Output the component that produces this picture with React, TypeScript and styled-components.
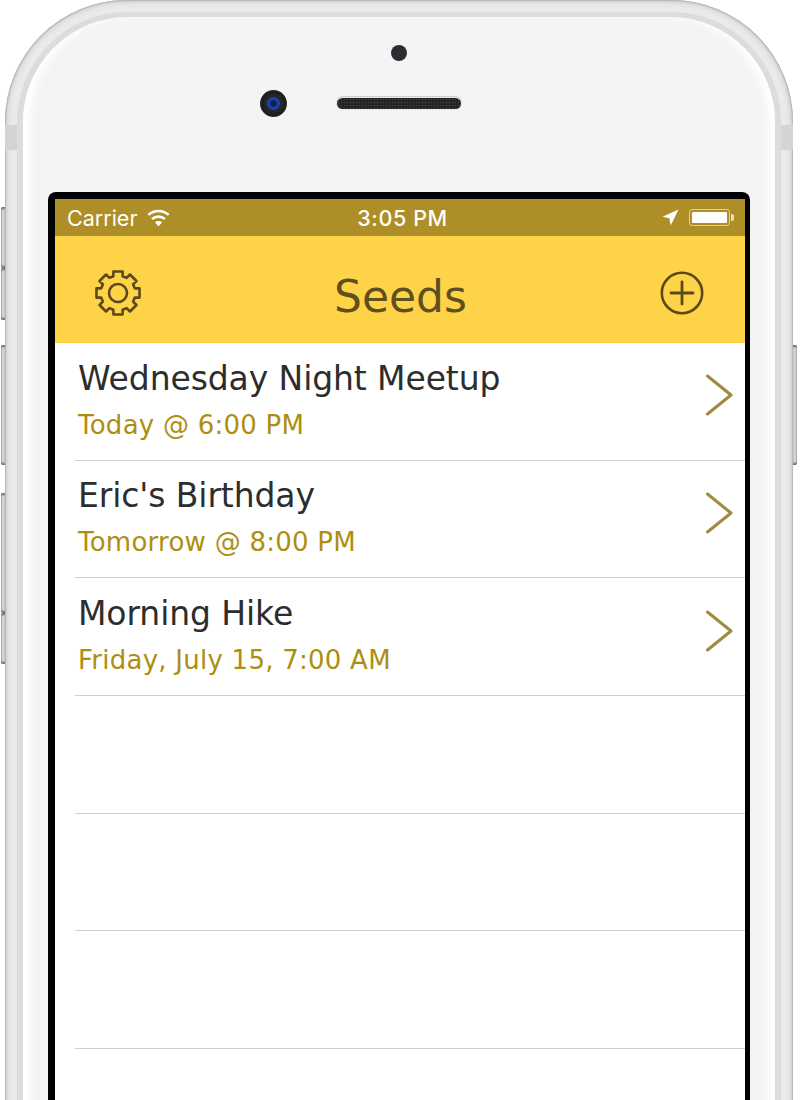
import React from 'react';
import styled, { createGlobalStyle } from 'styled-components';

const GlobalStyle = createGlobalStyle`
  html, body {
    margin: 0;
    padding: 0;
    background: #fff;
  }
  #root {
    height: 1100px;
    overflow: hidden;
  }
`;

const seeds = [
  { title: 'Wednesday Night Meetup', when: 'Today @ 6:00 PM' },
  { title: "Eric's Birthday", when: 'Tomorrow @ 8:00 PM' },
  { title: 'Morning Hike', when: 'Friday, July 15, 7:00 AM' },
  { title: '', when: '' },
  { title: '', when: '' },
  { title: '', when: '' },
  { title: '', when: '' }
];

const sideButtons = [
  { top: 207, height: 61 },
  { top: 268, height: 52 },
  { top: 345, height: 120 },
  { top: 493, height: 120 },
  { top: 613, height: 51 }
];

// 8 flat teeth round a ring, easier to compute than to write out by hand
const gearPath = () => {
  const cx = 24;
  const cy = 24;
  const outer = 22;
  const inner = 17.4;
  const pts: string[] = [];
  for (let i = 0; i < 8; i++) {
    const a = (i * Math.PI) / 4 - Math.PI / 2;
    const steps: [number, number][] = [
      [inner, -0.27],
      [outer, -0.21],
      [outer, 0.21],
      [inner, 0.27]
    ];
    steps.forEach(([r, d]) => {
      pts.push(`${(cx + r * Math.cos(a + d)).toFixed(2)} ${(cy + r * Math.sin(a + d)).toFixed(2)}`);
    });
  }
  return `M${pts.join('L')}Z`;
};

function App() {
  return (
    <>
      <GlobalStyle />
      <Page>
        {sideButtons.map((b) => (
          <SideButton key={b.top} $top={b.top} $height={b.height} />
        ))}
        <RightButton />
        <Phone>
          <AntennaLeft />
          <AntennaRight />
          <Band>
            <Face>
              <Sensors>
                <Dot />
                <EarRow>
                  <Camera>
                    <Lens />
                  </Camera>
                  <Speaker />
                  <span />
                </EarRow>
              </Sensors>
              <Bezel>
                <Screen>
                  <StatusBar>
                    <StatusLeft>
                      Carrier
                      <svg width="25" height="18" viewBox="1.5 0 21 17">
                        <path d="M12 16.5 8.6 12.6a5 5 0 0 1 6.8 0z" fill="#fff" />
                        <path
                          d="M5.9 9.6a9 9 0 0 1 12.2 0M2.4 5.6a14.2 14.2 0 0 1 19.2 0"
                          fill="none"
                          stroke="#fff"
                          strokeWidth="2.4"
                        />
                      </svg>
                    </StatusLeft>
                    <StatusTime>3:05 PM</StatusTime>
                    <StatusRight>
                      <svg width="17" height="17" viewBox="0 0 17 17">
                        <path d="M16.5.5 8.7 16.5 7.4 9.3.5 7.8z" fill="#fff" />
                      </svg>
                      <Battery>
                        <BatteryFill />
                      </Battery>
                    </StatusRight>
                  </StatusBar>
                  <NavBar>
                    <svg width="48" height="48" viewBox="0 0 48 48">
                      <path d={gearPath()} fill="none" stroke="#5a4a18" strokeWidth="2.6" strokeLinejoin="round" />
                      <circle cx="24" cy="24" r="9" fill="none" stroke="#5a4a18" strokeWidth="2.6" />
                    </svg>
                    <NavTitle>Seeds</NavTitle>
                    <svg width="46" height="46" viewBox="0 0 46 46">
                      <circle cx="23" cy="23" r="20.2" fill="none" stroke="#5a4a18" strokeWidth="2.6" />
                      <path d="M12 23h22M23 12v22" fill="none" stroke="#5a4a18" strokeWidth="2.8" strokeLinecap="round" />
                    </svg>
                  </NavBar>
                  <List>
                    {seeds.map((seed, i) => (
                      <Row key={i}>
                        {seed.title && (
                          <>
                            <RowText>
                              <RowTitle>{seed.title}</RowTitle>
                              <RowWhen>{seed.when}</RowWhen>
                            </RowText>
                            <Chevron width="28" height="42" viewBox="0 0 28 42">
                              <path
                                d="M2.5 2 26 21 2.5 40"
                                fill="none"
                                stroke="#a08a3c"
                                strokeWidth="3"
                                strokeLinecap="round"
                                strokeLinejoin="round"
                              />
                            </Chevron>
                          </>
                        )}
                      </Row>
                    ))}
                  </List>
                </Screen>
              </Bezel>
            </Face>
          </Band>
        </Phone>
      </Page>
    </>
  );
}

const Page = styled.div`
  position: relative;
  width: 800px;
  height: 1100px;
  overflow: hidden;
  background: #fff;
  padding-left: 5px;
  box-sizing: border-box;
`;

const SideButton = styled.div<{ $top: number; $height: number }>`
  position: absolute;
  left: 1px;
  top: ${(p) => p.$top}px;
  width: 4px;
  height: ${(p) => p.$height}px;
  box-sizing: border-box;
  border-radius: 2px 0 0 2px;
  background: linear-gradient(90deg, #9a9a9a, #dedede 45%, #c0c0c0);
  box-shadow: inset 0 4px 2px -2px #6f6f6f, inset 0 -4px 2px -2px #6f6f6f;
`;

const RightButton = styled.div`
  position: absolute;
  left: 793px;
  top: 345px;
  width: 4px;
  height: 120px;
  border-radius: 0 2px 2px 0;
  background: linear-gradient(270deg, #9a9a9a, #dedede 45%, #c0c0c0);
  box-shadow: inset 0 4px 2px -2px #6f6f6f, inset 0 -4px 2px -2px #6f6f6f;
`;

const Phone = styled.div`
  position: relative;
  width: 788px;
  height: 1300px;
  box-sizing: border-box;
  padding: 12px 12px 0;
  border-radius: 122px 122px 0 0;
  background: #e9eaeb;
  box-shadow: inset 0 0 2px #77787b, inset 0 0 7px #b4b5b7;
`;

const AntennaLeft = styled.div`
  position: absolute;
  left: 0;
  top: 125px;
  width: 12px;
  height: 25px;
  background: #d3d4d5;
`;

const AntennaRight = styled(AntennaLeft)`
  left: auto;
  right: 0;
`;

const Band = styled.div`
  position: relative;
  height: 100%;
  box-sizing: border-box;
  padding: 5px 6px 0;
  border-radius: 110px 110px 0 0;
  background: #dbdcdc;
`;

const Face = styled.div`
  height: 100%;
  box-sizing: border-box;
  padding: 0 25px;
  border-radius: 105px 105px 0 0;
  background: #f4f4f4;
  box-shadow: inset 10px 0 8px -3px #fff, inset -10px 0 8px -3px #fff;
`;

const Sensors = styled.div`
  height: 175px;
  box-sizing: border-box;
  padding-top: 28px;
  display: flex;
  flex-direction: column;
  align-items: center;
`;

const Dot = styled.div`
  width: 16px;
  height: 16px;
  border-radius: 50%;
  background: #2b2d33;
`;

const EarRow = styled.div`
  width: 100%;
  margin-top: 29px;
  display: grid;
  grid-template-columns: 1fr auto 1fr;
  align-items: center;
  column-gap: 50px;
`;

const Camera = styled.div`
  justify-self: end;
  width: 27px;
  height: 27px;
  border-radius: 50%;
  display: flex;
  align-items: center;
  justify-content: center;
  background: radial-gradient(circle, #26262a 45%, #1b1b1e 62%, #6a6a6a 100%);
`;

const Lens = styled.div`
  width: 13px;
  height: 13px;
  border-radius: 50%;
  background: radial-gradient(circle, #0a1c4e 18%, #1c4ab0 55%, #12296a 100%);
`;

const Speaker = styled.div`
  width: 124px;
  height: 11px;
  border-radius: 6px;
  background-color: #242527;
  background-image: radial-gradient(circle, #4a4b4d 35%, transparent 45%);
  background-size: 3px 3px;
  box-shadow: 0 0 0 1px #e6e6e6, 0 -1px 0 1px #cfcfcf;
`;

const Bezel = styled.div`
  height: 1100px;
  box-sizing: border-box;
  padding: 7px 5px 0 7px;
  border-radius: 8px 8px 0 0;
  background: #000;
`;

const Screen = styled.div`
  height: 100%;
  background: #fff;
`;

const StatusBar = styled.div`
  height: 37px;
  box-sizing: border-box;
  padding: 0 15px 0 12px;
  display: grid;
  grid-template-columns: 1fr auto 1fr;
  align-items: center;
  background: #ae8e26;
  color: #fff;
  font-family: Inter, "Liberation Sans", sans-serif;
`;

const StatusLeft = styled.div`
  display: flex;
  align-items: center;
  gap: 9px;
  font-size: 21.5px;
`;

const StatusTime = styled.div`
  margin-left: 8px;
  font-size: 21.5px;
  font-weight: 500;
  letter-spacing: 0.6px;
`;

const StatusRight = styled.div`
  display: flex;
  align-items: center;
  justify-content: flex-end;
  gap: 10px;
`;

const Battery = styled.div`
  position: relative;
  width: 41px;
  height: 17px;
  box-sizing: border-box;
  padding: 2px;
  border: 1px solid #dccd9c;
  border-radius: 3px;

  &::after {
    content: '';
    position: absolute;
    right: -5px;
    top: 4px;
    width: 3px;
    height: 7px;
    border-radius: 0 2px 2px 0;
    background: #e8dfc0;
  }
`;

const BatteryFill = styled.div`
  height: 100%;
  border-radius: 1px;
  background: #fff;
`;

const NavBar = styled.div`
  height: 107px;
  box-sizing: border-box;
  padding: 7px 40px 0 39px;
  display: flex;
  align-items: center;
  justify-content: space-between;
  background: #ffd347;
`;

const NavTitle = styled.div`
  margin-top: 7px;
  font-family: "DejaVu Sans", Verdana, sans-serif;
  font-size: 44px;
  color: #5f4f1e;
`;

const List = styled.div`
  display: flex;
  flex-direction: column;
`;

const Row = styled.div`
  height: 117.67px;
  box-sizing: border-box;
  margin-left: 20px;
  padding: 0 12px 0 3px;
  display: flex;
  align-items: center;
  justify-content: space-between;
  border-bottom: 1px solid #cfcfcf;
`;

const RowText = styled.div`
  display: flex;
  flex-direction: column;
  gap: 10px;
  margin-bottom: 3px;
`;

const RowTitle = styled.div`
  font-family: "DejaVu Sans", Verdana, sans-serif;
  font-size: 33px;
  line-height: 40px;
  letter-spacing: -0.1px;
  color: #2d2d2d;
`;

const RowWhen = styled.div`
  font-family: "DejaVu Sans", Verdana, sans-serif;
  font-size: 26px;
  line-height: 32px;
  letter-spacing: 0.25px;
  color: #ae8e0f;
`;

const Chevron = styled.svg`
  margin-bottom: 12px;
`;

export default App;
